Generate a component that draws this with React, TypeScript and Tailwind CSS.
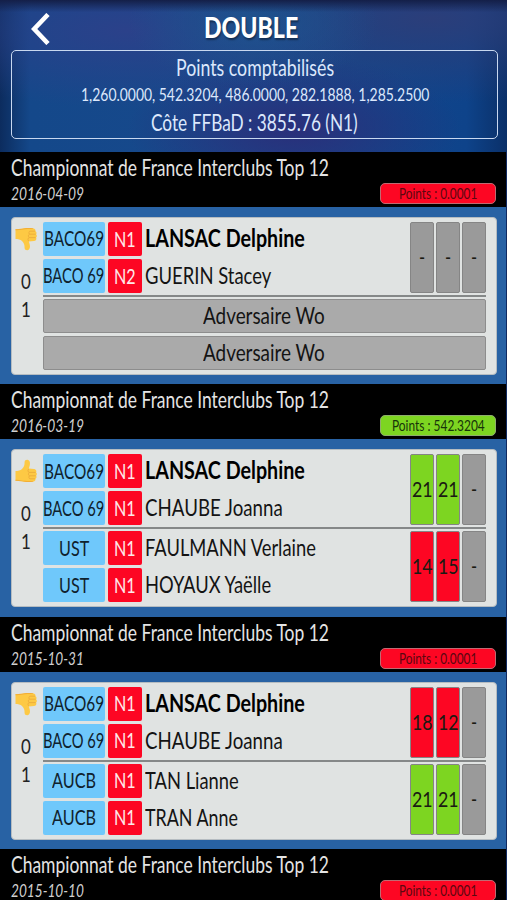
import { useLayoutEffect, useRef, useState } from 'react'

interface Player {
  club: string
  clubWidth: number
  rank: string
  name: string
  nameWidth: number
}

interface Match {
  date: string
  points: string
  pointsWidth: number
  won: boolean
  gain: boolean
  players: Player[]
  opponents: Player[]
  scores: string[]
  opponentScores: string[]
}

const delphine: Player = { club: 'BACO69', clubWidth: 60, rank: 'N1', name: 'LANSAC Delphine', nameWidth: 160 }
const joanna: Player = { club: 'BACO 69', clubWidth: 61, rank: 'N1', name: 'CHAUBE Joanna', nameWidth: 138 }

const matches: Match[] = [
  {
    date: '2016-04-09',
    points: 'Points : 0.0001',
    pointsWidth: 78,
    won: false,
    gain: false,
    players: [delphine, { club: 'BACO 69', clubWidth: 61, rank: 'N2', name: 'GUERIN Stacey', nameWidth: 126 }],
    opponents: [],
    scores: ['-', '-', '-'],
    opponentScores: [],
  },
  {
    date: '2016-03-19',
    points: 'Points : 542.3204',
    pointsWidth: 93,
    won: true,
    gain: true,
    players: [delphine, joanna],
    opponents: [
      { club: 'UST', clubWidth: 30, rank: 'N1', name: 'FAULMANN Verlaine', nameWidth: 171 },
      { club: 'UST', clubWidth: 30, rank: 'N1', name: 'HOYAUX Yaëlle', nameWidth: 126 },
    ],
    scores: ['21', '21', '-'],
    opponentScores: ['14', '15', '-'],
  },
  {
    date: '2015-10-31',
    points: 'Points : 0.0001',
    pointsWidth: 78,
    won: false,
    gain: false,
    players: [delphine, joanna],
    opponents: [
      { club: 'AUCB', clubWidth: 44, rank: 'N1', name: 'TAN Lianne', nameWidth: 94 },
      { club: 'AUCB', clubWidth: 44, rank: 'N1', name: 'TRAN Anne', nameWidth: 93 },
    ],
    scores: ['18', '12', '-'],
    opponentScores: ['21', '21', '-'],
  },
]

// Squeezes a line of text horizontally to the given width
function Condensed({ text, width, className = '' }: { text: string; width: number; className?: string }) {
  const ref = useRef<HTMLSpanElement>(null)
  const [scale, setScale] = useState(1)

  useLayoutEffect(() => {
    if (ref.current) setScale(width / ref.current.offsetWidth)
  }, [text, width])

  return (
    <span className={`flex shrink-0 whitespace-nowrap ${className}`} style={{ width }}>
      <span ref={ref} className="block shrink-0 origin-left" style={{ transform: `scaleX(${scale})` }}>
        {text}
      </span>
    </span>
  )
}

function Thumb({ up }: { up: boolean }) {
  return (
    <svg viewBox="0 0 22 24" className={up ? 'h-6 w-[22px]' : 'h-6 w-[22px] -scale-y-100'}>
      <path
        d="M0.5 12 C3 12 5.5 11.500 7 10 C9 8 9.600 6.500 9.600 3 C9.600 1.200 11.200 0.600 12.500 0.800 C15 1.200 15.300 4 14.700 6.500 L13.900 9.600 L19 9.900 C21.300 10.200 21.900 12.400 21 13.300 C22.200 14.100 22 16.300 21.100 16.800 C21.900 17.800 21.500 19.400 20.500 19.800 C20.800 21.300 19.600 22.700 17.700 22.800 C13 23.300 9.500 23 7 22.200 L0.500 21.800 Z"
        fill="#fdc944"
      />
      <path d="M0.500 20.800 C6 20.800 8 22.500 18.200 22 L17.700 22.800 C13 23.300 9.500 23 7 22.200 L0.500 21.800 Z" fill="#f3ae35" />
      <path
        d="M13.600 10 C12.500 11.500 12.900 13 14.200 13.400 H20.600 M14.200 13.400 C13 14.500 13.200 16.300 14.400 16.800 H20.700 M14.400 16.800 C13.600 18 13.900 19.600 14.900 19.800 H20"
        fill="none"
        stroke="#e8a538"
        strokeWidth="0.7"
      />
    </svg>
  )
}

function PlayerRow({ player, bold }: { player: Player; bold: boolean }) {
  return (
    <div className="flex h-[34px] items-center">
      <div className="flex h-full w-[62px] items-center justify-center rounded-[2px] bg-[#6fc8fb] pb-[2px] text-[21px] text-[#10222d]">
        <Condensed text={player.club} width={player.clubWidth} />
      </div>
      <div className="ml-[3px] flex h-full w-[34px] items-center justify-center rounded-[2px] bg-[#fd0623] pb-[2px] text-[22px] text-[#ffe9ea]">
        <Condensed text={player.rank} width={22} />
      </div>
      <Condensed
        text={player.name}
        width={player.nameWidth}
        className={bold ? 'ml-[3px] pb-[2px] text-[24px] font-bold text-black' : 'ml-[3px] pb-[2px] text-[24px] text-[#141414]'}
      />
    </div>
  )
}

function Scores({ scores, win }: { scores: string[]; win: boolean }) {
  return (
    <div className="flex gap-[2px]">
      {scores.map((score, i) => (
        <div
          key={i}
          className={`flex h-[71px] w-6 items-center justify-center rounded-[2px] border border-[#858585] pb-[2px] text-[22px] text-[#1a1a12] ${
            score === '-' ? 'bg-[#9a9a9a]' : win ? 'bg-[#7dd521]' : 'bg-[#fd0623]'
          }`}
        >
          <Condensed text={score} width={score === '-' ? 6 : 21} />
        </div>
      ))}
    </div>
  )
}

function Team({ players, scores, win, first }: { players: Player[]; scores: string[]; win: boolean; first?: boolean }) {
  return (
    <div className="flex justify-between">
      <div className="flex flex-col gap-[3px]">
        {players.map((player, i) => (
          <PlayerRow key={i} player={player} bold={!!first && i === 0} />
        ))}
      </div>
      <Scores scores={scores} win={win} />
    </div>
  )
}

function MatchHeader({ date, points, pointsWidth, gain }: { date: string; points: string; pointsWidth: number; gain: boolean }) {
  return (
    <div className="h-[55px] bg-black pl-[11px] pr-[10px]">
      <Condensed text="Championnat de France Interclubs Top 12" width={318} className="text-[23px] leading-[30px] text-[#e4e4e4]" />
      <div className="flex items-start justify-between pt-px">
        <Condensed text={date} width={73} className="mt-[2px] text-[17px] leading-[17px] text-[#d0d0d0] italic" />
        <div
          className={`flex h-[21px] w-[116px] items-center justify-center rounded-[5px] border pb-px text-[15px] ${
            gain ? 'border-[#8fae6c] bg-[#7dd521] text-[#17330a]' : 'border-[#c06a72] bg-[#fd0623] text-[#5c0610]'
          }`}
        >
          <Condensed text={points} width={pointsWidth} />
        </div>
      </div>
    </div>
  )
}

function MatchCard({ match }: { match: Match }) {
  return (
    <div className="h-[177.4px] bg-[#2862a4] pt-[10px] pr-[9px] pl-[11px]">
      <div className="flex h-[158px] rounded-[4px] border border-[#b5bcc1] bg-[#e0e3e2] pt-1 pr-[10px] pl-[3px]">
        <div className="flex w-[27.500px] flex-col text-[22px] text-[#222222]">
          <div className="mt-[5px] h-6">
            <Thumb up={match.won} />
          </div>
          <div className="mt-[16px] pl-[6px] leading-7">
            <Condensed text="0" width={10} />
            <Condensed text="1" width={10} />
          </div>
        </div>
        <div className="flex-1">
          <Team players={match.players} scores={match.scores} win={match.won} first />
          <div className="my-[2px] h-[2px] bg-[#858888]" />
          {match.opponents.length > 0 ? (
            <Team players={match.opponents} scores={match.opponentScores} win={!match.won} />
          ) : (
            <div className="flex flex-col gap-[3px]">
              {[0, 1].map((i) => (
                <div
                  key={i}
                  className="flex h-[34px] items-center justify-center rounded-[2px] border border-[#8d8d8d] bg-[#aaaaaa] pb-[2px] text-[24px] text-[#141414]"
                >
                  <Condensed text="Adversaire Wo" width={122} />
                </div>
              ))}
            </div>
          )}
        </div>
      </div>
    </div>
  )
}

export default function App() {
  return (
    <div className="h-[900px] w-[507px] overflow-hidden bg-[#102a62] font-['Lato',sans-serif]">
      <header className="h-[152px] bg-[linear-gradient(180deg,#141f48_0%,#141f4800_8%),radial-gradient(ellipse_at_50%_15%,#1c568fcc_0%,transparent_35%),radial-gradient(ellipse_at_58%_85%,#2a2f7a_0%,transparent_40%),radial-gradient(ellipse_at_25%_20%,#2b418a_0%,transparent_45%),radial-gradient(ellipse_at_85%_12%,#2b3e7a_0%,transparent_45%),linear-gradient(90deg,#0c2c5e_0%,#14488a_6%,#18498c_50%,#0e438a_92%,#0a3069_100%)] pr-[9px] pl-[11px]">
        <div className="flex h-[50px] items-center">
          <svg viewBox="0 0 20 32" className="mt-2 ml-5 h-8 w-5" fill="none" stroke="white" strokeWidth="4.600">
            <path d="M17 1.500 L3.200 16 L17 30.500" />
          </svg>
          <div className="mt-[3px] ml-[153px] text-[29px] font-black text-white text-shadow-[1px_2px_2px_#00000066]">
            <Condensed text="DOUBLE" width={94} />
          </div>
        </div>
        <div className="flex h-[89px] flex-col items-center rounded-[5px] border border-[#c8d8f0] text-[23px] text-[#dce8fc]">
          <Condensed text="Points comptabilisés" width={158} className="mt-[2px] leading-[28px]" />
          <Condensed text="1,260.0000, 542.3204, 486.0000, 282.1888, 1,285.2500" width={348} className="text-[18px] leading-[26px]" />
          <Condensed text="Côte FFBaD : 3855.76 (N1)" width={207} className="leading-[30px]" />
        </div>
      </header>
      <main className="mr-px">
        {matches.map((match) => (
          <section key={match.date}>
            <MatchHeader {...match} />
            <MatchCard match={match} />
          </section>
        ))}
        <MatchHeader date="2015-10-10" points="Points : 0.0001" pointsWidth={78} gain={false} />
      </main>
    </div>
  )
}
